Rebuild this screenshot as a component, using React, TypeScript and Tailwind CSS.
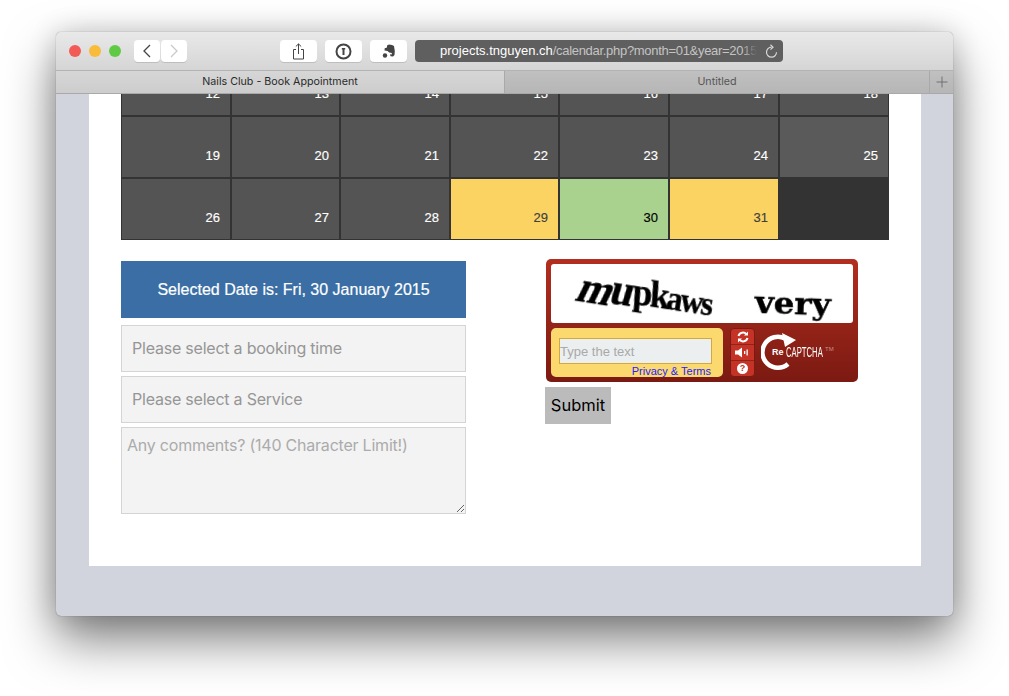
import React from "react";

const sans = "font-['Liberation_Sans',Arial,sans-serif]";
const ui = "font-['Inter','Noto_Sans',sans-serif]";

type Day = { n?: number; bg: string; text: string };
const dark = "bg-[#545454]";
const rows: Day[] = [
  ...[12, 13, 14, 15, 16, 17, 18].map((n) => ({ n, bg: dark, text: "text-white" })),
  ...[19, 20, 21, 22, 23, 24].map((n) => ({ n, bg: dark, text: "text-white" })),
  { n: 25, bg: "bg-[#5a5a5a]", text: "text-white" },
  ...[26, 27, 28].map((n) => ({ n, bg: dark, text: "text-white" })),
  { n: 29, bg: "bg-[#fbd363]", text: "text-[#3f3f3f]" },
  { n: 30, bg: "bg-[#a9d28e]", text: "text-black" },
  { n: 31, bg: "bg-[#fbd363]", text: "text-[#3f3f3f]" },
  { bg: "bg-[#333333]", text: "text-white" },
];

function Tool({ children, w = "w-[37px]" }: { children: React.ReactNode; w?: string }) {
  return (
    <div className={`${w} h-[22px] rounded-[4px] bg-white flex items-center justify-center shadow-[0_1px_0_rgba(0,0,0,0.12)]`}>
      {children}
    </div>
  );
}

export default function App() {
  return (
    <div className="w-[1009px] h-[696px] bg-white pt-[32px] pl-[56px] overflow-hidden">
      <div className="w-[897px] h-[584px] rounded-[5px] overflow-hidden bg-[#d1d4dc] flex flex-col shadow-[0_24px_50px_0px_rgba(0,0,0,0.5),0_0_28px_rgba(0,0,0,0.16),0_0_1px_rgba(0,0,0,0.5)]">
        {/* toolbar */}
        <div className="h-[39px] shrink-0 bg-gradient-to-b from-[#e9e9e9] to-[#d5d5d5] border-b border-[#b3b3b3] flex items-center pl-[13px]">
          <div className="flex gap-[8px] w-[65px]">
            <span className="w-[12px] h-[12px] rounded-full bg-[#f25a55]" />
            <span className="w-[12px] h-[12px] rounded-full bg-[#f9bb3a]" />
            <span className="w-[12px] h-[12px] rounded-full bg-[#5fcb45]" />
          </div>
          <div className="flex gap-[1px]">
            <Tool w="w-[26px]">
              <svg width="10" height="14" viewBox="0 0 10 14" fill="none" stroke="#444" strokeWidth="1.3"><path d="M8 1 2 7l6 6" /></svg>
            </Tool>
            <Tool w="w-[26px]">
              <svg width="10" height="14" viewBox="0 0 10 14" fill="none" stroke="#c9c9c9" strokeWidth="1.3"><path d="m2 1 6 6-6 6" /></svg>
            </Tool>
          </div>
          <div className="ml-[93px] flex gap-[8px]">
            <Tool>
              <svg width="13" height="17" viewBox="0 0 13 17" fill="none" stroke="#444" strokeWidth="1"><path d="M4 6.500H1.500v9.500h10V6.500H9M6.500 11V1M3.800 3.500 6.500 .9l2.700 2.600" /></svg>
            </Tool>
            <Tool>
              <svg width="17" height="17" viewBox="0 0 17 17"><circle cx="8.500" cy="8.500" r="7" fill="none" stroke="#444" strokeWidth="2" /><path d="M6.800 5h3.400v1.600H9.500V12H7.500V6.600h-.7z" fill="#444" /></svg>
            </Tool>
            <Tool>
              <svg width="14" height="14" viewBox="0 0 14 14" fill="#444"><path d="M5 1.500 7 .5l3 .5 2 1 .8 5-.3 4-1.500 1.500-2.500-.2-.5-2 1.700.1.200-1.500-2.700-.4L5.500 7 2.500 6.500l.2-2.200L5 3.500z" /><circle cx="3" cy="11.500" r="2.200" /></svg>
            </Tool>
            <div className={`w-[368px] h-[22px] rounded-[4px] bg-[#5f5f5f] flex items-center pl-[25px] pr-[5px] text-[13px] whitespace-nowrap ${sans}`}>
              <span className="text-white">projects.tnguyen.ch</span>
              <span className="text-[#c4c4c4] tracking-[-0.3px]">/calendar.php?month=01&amp;year=20</span>
              <span className="text-transparent bg-clip-text bg-gradient-to-r from-[#c4c4c4] to-[#5f5f5f] tracking-[-0.3px]">15</span>
              <svg className="ml-auto shrink-0" width="14" height="15" viewBox="0 0 14 15" fill="none" stroke="#d8d8d8" strokeWidth="1.200"><path d="M7.500 3.200a5 5 0 1 0 5 5" /><path d="M6.500 .8 9 3.200 6.500 5.600" /></svg>
            </div>
          </div>
        </div>
        {/* tabs */}
        <div className={`h-[23px] shrink-0 flex border-b border-[#a9a9a9] text-[10.7px] ${ui}`}>
          <div className="w-[448px] bg-gradient-to-b from-[#d6d6d6] to-[#cdcdcd] flex items-center justify-center text-[#2a2a2a]">
            Nails Club - Book Appointment
          </div>
          <div className="w-[425px] border-l border-[#a9a9a9] bg-gradient-to-b from-[#c0c0c0] to-[#b6b6b6] flex items-center justify-center text-[#555555]">
            Untitled
          </div>
          <div className="flex-1 border-l border-[#a9a9a9] bg-gradient-to-b from-[#c0c0c0] to-[#b6b6b6] flex items-center justify-center">
            <svg width="12" height="12" viewBox="0 0 12 12" stroke="#707070" strokeWidth="1"><path d="M6 .5v11M.5 6h11" /></svg>
          </div>
        </div>
        {/* page */}
        <div className="flex-1 min-h-0 overflow-hidden">
          <div className="mx-[33px] w-[832px] h-[472px] bg-white px-[32px] overflow-hidden">
            <div className={`grid grid-cols-[110px_109px_110px_109px_110px_110px_110px] grid-rows-[62px_62px_62px] -mt-[40px] ${sans} text-[13px] [-webkit-text-stroke:0.15px]`}>
              {rows.map((d, i) => (
                <div key={i} className={`${d.bg} ${d.text} border border-[#333333] flex items-end justify-end pr-[10px] pb-[13px] leading-[16px]`}>
                  {d.n}
                </div>
              ))}
            </div>
            <div className="flex mt-[21px]">
              <div className="w-[345px] flex flex-col">
                <div className={`h-[57px] bg-[#3a6ea5] text-white text-[16px] [-webkit-text-stroke:0.2px] flex items-center justify-center ${sans}`}>
                  Selected Date is: Fri, 30 January 2015
                </div>
                <input readOnly placeholder="Please select a booking time" className={`mt-[7px] h-[47px] border border-[#d4d4d4] bg-[#f3f3f3] px-[10px] pb-[2px] text-[16px] tracking-[-0.22px] outline-none placeholder:text-[#969696] ${ui}`} />
                <input readOnly placeholder="Please select a Service" className={`mt-[4px] h-[47px] border border-[#d4d4d4] bg-[#f3f3f3] px-[10px] pb-[2px] text-[16px] tracking-[-0.22px] outline-none placeholder:text-[#969696] ${ui}`} />
                <textarea readOnly placeholder="Any comments? (140 Character Limit!)" className={`mt-[4px] h-[87px] border border-[#d4d4d4] bg-[#f3f3f3] px-[5px] py-[7px] text-[16px] tracking-[-0.22px] leading-[20px] outline-none placeholder:text-[#ababab] ${ui}`} />
              </div>
              <div className="ml-[79px] -mt-[2px] flex flex-col items-start">
                {/* captcha */}
                <div className={`ml-[1px] w-[312px] h-[123px] rounded-[5px] bg-gradient-to-b from-[#b32e1f] to-[#7b1a12] p-[5px] flex flex-col gap-[5px] ${sans}`}>
                  <div className="h-[59px] rounded-[3px] bg-white flex overflow-hidden items-center">
                    <div className="ml-[29px] -mt-[14px] flex items-center font-['Liberation_Serif',serif] font-bold text-[44px] leading-none tracking-[-2.5px] text-black rotate-[9deg] scale-x-[0.94] origin-left blur-[0.35px] [-webkit-text-stroke:0.4px_#000]">
                      <span className="inline-block -skew-x-[18deg]">m</span>
                      <span className="inline-block -skew-x-[8deg] translate-y-[-3px]">u</span>
                      <span className="inline-block skew-x-[6deg] translate-y-[-5px] text-[38px]">pk</span>
                      <span className="inline-block translate-y-[-3px] text-[34px]">aws</span>
                    </div>
                    <div className="ml-auto mr-[27px] mt-[21px] font-['DejaVu_Serif',serif] font-bold text-[29px] leading-none text-black rotate-[2deg] scale-x-[1.12] blur-[0.7px] [-webkit-text-stroke:0.5px_#000]">very</div>
                  </div>
                  <div className="h-[49px] flex">
                    <div className="w-[172px] h-[49px] rounded-[5px] bg-[#fcd96f] pl-[8px] pr-[12px] pt-[10px] flex flex-col">
                      <div className="h-[27px] mr-[-1px] border border-[#d4a93c] bg-[#ebeff0] text-[13px] text-[#a9a9a9] flex items-center leading-none">Type the text</div>
                      <div className="text-[11px] leading-[12px] text-[#2222ff] text-right pt-[1px]">Privacy &amp; Terms</div>
                    </div>
                    <div className="ml-[7px] w-[25px] rounded-[4px] border border-[#7b1a12] bg-[#c43325] flex flex-col divide-y divide-[#8c2418]">
                      <div className="flex-1 flex items-center justify-center">
                        <svg width="12" height="12" viewBox="0 0 12 12" fill="none" stroke="#fff" strokeWidth="2"><path d="M1.500 5A4.500 4.500 0 0 1 9.500 3.500M10.500 7A4.500 4.500 0 0 1 2.500 8.500" /><path d="M11 .5v4H7zM1 11.500v-4h4z" fill="#fff" stroke="none" /></svg>
                      </div>
                      <div className="flex-1 flex items-center justify-center">
                        <svg width="15" height="11" viewBox="0 0 15 11" fill="#fff"><path d="M0 3.500h3L7 .5v10l-4-3H0z" /><rect x="9" y="4" width="1.300" height="3" /><rect x="11.500" y="2.500" width="1.300" height="6" /></svg>
                      </div>
                      <div className="flex-1 flex items-center justify-center">
                        <span className="w-[11px] h-[11px] rounded-full bg-white text-[#c43325] text-[9px] font-bold leading-[11px] text-center">?</span>
                      </div>
                    </div>
                    <div className="ml-[6px] w-[75px] flex items-center relative">
                      <svg width="38" height="40" viewBox="0 0 38 40" fill="none"><path d="M27 31A15.500 15.500 0 1 1 24 5.500" stroke="#fff" strokeWidth="4.500" /><path d="M21 0 35 7 24 14z" fill="#fff" /></svg>
                      <span className="absolute left-[11px] top-[18px] text-white font-bold text-[9px] leading-[12px]">Re</span>
                      <span className="absolute left-[25px] top-[17px] text-white text-[14px] leading-[15px] scale-x-[0.55] origin-left whitespace-nowrap">CAPTCHA</span>
                      <span className="absolute left-[64px] top-[16px] text-[#c98f85] text-[6px] leading-[10px]">TM</span>
                    </div>
                  </div>
                </div>
                <div className={`mt-[5px] w-[66px] h-[37px] bg-[#bbbbbb] text-black text-[16.5px] flex items-center justify-center ${ui}`}>Submit</div>
              </div>
            </div>
          </div>
        </div>
      </div>
    </div>
  );
}
